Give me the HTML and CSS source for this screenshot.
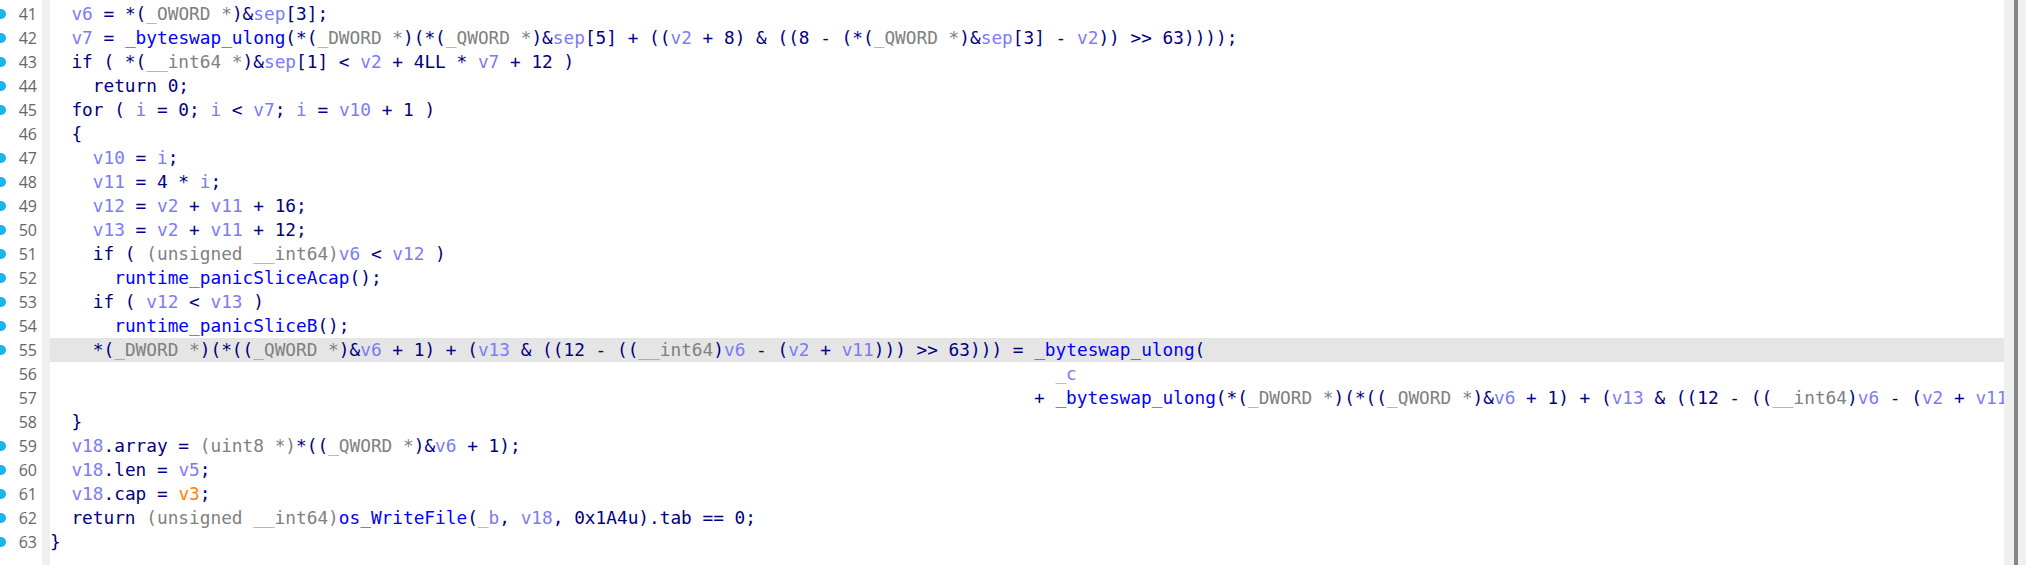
FILE: index.html
```html
<!DOCTYPE html>
<html>
<head>
<meta charset="utf-8">
<link rel="stylesheet" href="styles.css">
</head>
<body>
<div class="editor">
  <div class="gutter">
    <div class="gl"><span class="dot"></span><span>41</span></div>
    <div class="gl"><span class="dot"></span><span>42</span></div>
    <div class="gl"><span class="dot"></span><span>43</span></div>
    <div class="gl"><span class="dot"></span><span>44</span></div>
    <div class="gl"><span class="dot"></span><span>45</span></div>
    <div class="gl"><span class="dot off"></span><span>46</span></div>
    <div class="gl"><span class="dot"></span><span>47</span></div>
    <div class="gl"><span class="dot"></span><span>48</span></div>
    <div class="gl"><span class="dot"></span><span>49</span></div>
    <div class="gl"><span class="dot"></span><span>50</span></div>
    <div class="gl"><span class="dot"></span><span>51</span></div>
    <div class="gl"><span class="dot"></span><span>52</span></div>
    <div class="gl"><span class="dot"></span><span>53</span></div>
    <div class="gl"><span class="dot"></span><span>54</span></div>
    <div class="gl"><span class="dot"></span><span>55</span></div>
    <div class="gl"><span class="dot off"></span><span>56</span></div>
    <div class="gl"><span class="dot off"></span><span>57</span></div>
    <div class="gl"><span class="dot off"></span><span>58</span></div>
    <div class="gl"><span class="dot"></span><span>59</span></div>
    <div class="gl"><span class="dot"></span><span>60</span></div>
    <div class="gl"><span class="dot"></span><span>61</span></div>
    <div class="gl"><span class="dot"></span><span>62</span></div>
    <div class="gl"><span class="dot"></span><span>63</span></div>
  </div>
  <div class="strip"></div>
  <div class="code">
<div class="ln">  <span class="v">v6</span> = *(<span class="t">_OWORD *</span>)&amp;<span class="v">sep</span>[3];</div>
<div class="ln">  <span class="v">v7</span> = <span class="f">_byteswap_ulong</span>(*(<span class="t">_DWORD *</span>)(*(<span class="t">_QWORD *</span>)&amp;<span class="v">sep</span>[5] + ((<span class="v">v2</span> + 8) &amp; ((8 - (*(<span class="t">_QWORD *</span>)&amp;<span class="v">sep</span>[3] - <span class="v">v2</span>)) &gt;&gt; 63))));</div>
<div class="ln">  if ( *(<span class="t">__int64 *</span>)&amp;<span class="v">sep</span>[1] &lt; <span class="v">v2</span> + 4LL * <span class="v">v7</span> + 12 )</div>
<div class="ln">    return 0;</div>
<div class="ln">  for ( <span class="v">i</span> = 0; <span class="v">i</span> &lt; <span class="v">v7</span>; <span class="v">i</span> = <span class="v">v10</span> + 1 )</div>
<div class="ln">  {</div>
<div class="ln">    <span class="v">v10</span> = <span class="v">i</span>;</div>
<div class="ln">    <span class="v">v11</span> = 4 * <span class="v">i</span>;</div>
<div class="ln">    <span class="v">v12</span> = <span class="v">v2</span> + <span class="v">v11</span> + 16;</div>
<div class="ln">    <span class="v">v13</span> = <span class="v">v2</span> + <span class="v">v11</span> + 12;</div>
<div class="ln">    if ( <span class="t">(unsigned __int64)</span><span class="v">v6</span> &lt; <span class="v">v12</span> )</div>
<div class="ln">      <span class="f">runtime_panicSliceAcap</span>();</div>
<div class="ln">    if ( <span class="v">v12</span> &lt; <span class="v">v13</span> )</div>
<div class="ln">      <span class="f">runtime_panicSliceB</span>();</div>
<div class="ln hl">    *(<span class="t">_DWORD *</span>)(*((<span class="t">_QWORD *</span>)&amp;<span class="v">v6</span> + 1) + (<span class="v">v13</span> &amp; ((12 - ((<span class="t">__int64</span>)<span class="v">v6</span> - (<span class="v">v2</span> + <span class="v">v11</span>))) &gt;&gt; 63))) = <span class="f">_byteswap_ulong</span>(</div>
<div class="ln">                                                                                              <span class="v">_c</span></div>
<div class="ln">                                                                                            + <span class="f">_byteswap_ulong</span>(*(<span class="t">_DWORD *</span>)(*((<span class="t">_QWORD *</span>)&amp;<span class="v">v6</span> + 1) + (<span class="v">v13</span> &amp; ((12 - ((<span class="t">__int64</span>)<span class="v">v6</span> - (<span class="v">v2</span> + <span class="v">v11</span>))) &gt;&gt; 63))));</div>
<div class="ln">  }</div>
<div class="ln">  <span class="v">v18</span>.array = <span class="t">(uint8 *)</span>*((<span class="t">_QWORD *</span>)&amp;<span class="v">v6</span> + 1);</div>
<div class="ln">  <span class="v">v18</span>.len = <span class="v">v5</span>;</div>
<div class="ln">  <span class="v">v18</span>.cap = <span class="g">v3</span>;</div>
<div class="ln">  return <span class="t">(unsigned __int64)</span><span class="f">os_WriteFile</span>(<span class="v">_b</span>, <span class="v">v18</span>, 0x1A4u).tab == 0;</div>
<div class="ln">}</div>
  </div>
  <div class="scroll"><div class="thumb"></div></div>
</div>
</body>
</html>
```

FILE: styles.css
```css
html, body {
  margin: 0;
  padding: 0;
  background: #ffffff;
  overflow: hidden;
}

.editor {
  display: flex;
  height: 565px;
  width: 2026px;
}

.gutter {
  width: 42px;
  flex: none;
  padding-top: 2px;
  font-family: "Open Sans", "Noto Sans", sans-serif;
  font-size: 16px;
  color: #666666;
  overflow: hidden;
}

.gl {
  height: 24px;
  display: flex;
  align-items: center;
  justify-content: space-between;
  padding-right: 5px;
}

.dot {
  width: 10px;
  height: 10px;
  border-radius: 50%;
  background: #1cb4f0;
  margin-left: -4px;
}

.dot.off {
  visibility: hidden;
}

.strip {
  width: 8px;
  flex: none;
  background: #f0f0f0;
}

.code {
  flex: 1;
  min-width: 0;
  overflow: hidden;
  padding-top: 2px;
  font-family: "DejaVu Sans Mono", "Liberation Mono", monospace;
  font-size: 17.78px;
  color: #000080;
}

.ln {
  height: 24px;
  line-height: 24px;
  white-space: pre;
}

.hl {
  background: #e5e5e5;
}

.v { color: #7b7bf7; }
.t { color: #808080; }
.f { color: #0000ff; }
.g { color: #ff8000; }

.scroll {
  width: 22px;
  flex: none;
  background: #f0f0f0;
  padding-left: 10px;
  box-sizing: border-box;
}

.thumb {
  width: 4px;
  height: 100%;
  background: #878787;
}
```
